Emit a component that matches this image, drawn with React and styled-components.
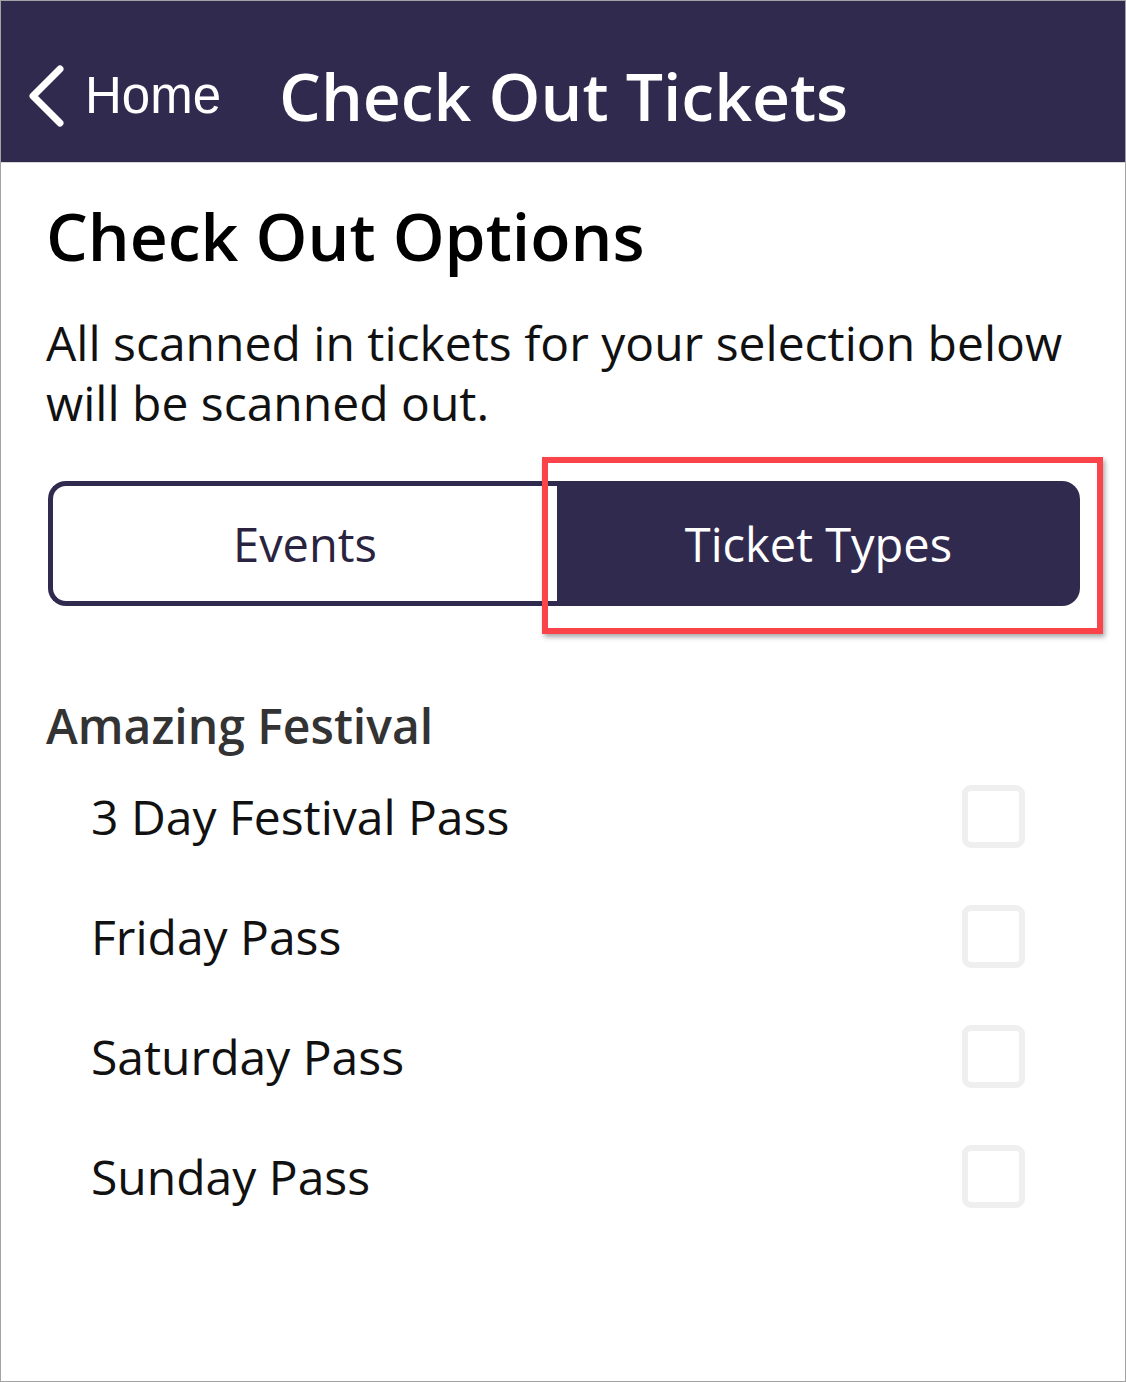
import React from 'react';
import styled, { createGlobalStyle } from 'styled-components';

const GlobalStyle = createGlobalStyle`
  html, body {
    margin: 0;
    padding: 0;
    background: #fff;
  }
`;

const Frame = styled.div`
  width: 1126px;
  height: 1382px;
  box-sizing: border-box;
  border: 1px solid #a3a3a3;
  background: #fff;
  font-family: "Open Sans", sans-serif;
  overflow: hidden;
`;

const Header = styled.header`
  height: 161px;
  background: #312a4f;
  border-bottom: 1px solid #d6d6d6;
  display: flex;
  align-items: center;
  padding-left: 26px;
`;

const BackLink = styled.div`
  display: flex;
  align-items: center;
  color: #fff;
  font-family: "Liberation Sans", Arial, sans-serif;
  font-size: 51px;
  gap: 20px;
  margin-top: 28px;
`;

const HeaderTitle = styled.h1`
  margin: 26px 0 0 58px;
  color: #fff;
  font-size: 66px;
  font-weight: 600;
`;

const Content = styled.main`
  padding: 0 45px 0 45px;
`;

const PageTitle = styled.h2`
  margin: 34px 0 0;
  font-size: 66px;
  font-weight: 600;
  color: #000;
  line-height: 76px;
`;

const Lead = styled.p`
  margin: 40px 0 0;
  font-size: 48px;
  line-height: 60px;
  color: #111;
`;

const SegmentWrap = styled.div`
  position: relative;
  margin: 48px 0 0 2px;
`;

const Segment = styled.div`
  display: flex;
  height: 125px;
`;

const SegButton = styled.div`
  box-sizing: border-box;
  display: flex;
  align-items: center;
  justify-content: center;
  font-size: 47px;
  ${(p) =>
    p.$active
      ? `
    flex: 1;
    background: #312a4f;
    color: #fff;
    border-radius: 0 18px 18px 0;
  `
      : `
    width: 509px;
    background: #fff;
    color: #2a2340;
    border: 5px solid #312a4f;
    border-right: none;
    border-radius: 18px 0 0 18px;
  `}
`;

const Highlight = styled.div`
  position: absolute;
  left: 494px;
  top: -24px;
  width: 561px;
  height: 177px;
  box-sizing: border-box;
  border: 6px solid #fb4449;
  box-shadow: 2px 3px 5px rgba(0, 0, 0, 0.35);
  pointer-events: none;
`;

const GroupTitle = styled.h3`
  margin: 90px 0 0;
  font-size: 48px;
  font-weight: 600;
  color: #333;
  line-height: 60px;
`;

const List = styled.ul`
  list-style: none;
  margin: 0;
  padding: 0 0 0 45px;
`;

const Item = styled.li`
  height: 120px;
  display: flex;
  align-items: center;
  justify-content: space-between;
  padding-right: 55px;
  font-size: 48px;
  color: #111;
`;

const Check = styled.span`
  width: 63px;
  height: 63px;
  box-sizing: border-box;
  border: 6px solid #efefef;
  border-radius: 9px;
`;

const passes = ['3 Day Festival Pass', 'Friday Pass', 'Saturday Pass', 'Sunday Pass'];

const App = () => {
  return (
    <Frame>
      <GlobalStyle />
      <Header>
        <BackLink>
          <svg width="38" height="62" viewBox="0 0 38 62" fill="none">
            <path d="M33 4 L6 31 L33 58" stroke="#fff" strokeWidth="7" strokeLinecap="round" strokeLinejoin="round" />
          </svg>
          Home
        </BackLink>
        <HeaderTitle>Check Out Tickets</HeaderTitle>
      </Header>
      <Content>
        <PageTitle>Check Out Options</PageTitle>
        <Lead>
          All scanned in tickets for your selection below
          <br />
          will be scanned out.
        </Lead>
        <SegmentWrap>
          <Segment>
            <SegButton>Events</SegButton>
            <SegButton $active>Ticket Types</SegButton>
          </Segment>
          <Highlight />
        </SegmentWrap>
        <GroupTitle>Amazing Festival</GroupTitle>
        <List>
          {passes.map((p) => (
            <Item key={p}>
              {p}
              <Check />
            </Item>
          ))}
        </List>
      </Content>
    </Frame>
  );
};

export default App;
